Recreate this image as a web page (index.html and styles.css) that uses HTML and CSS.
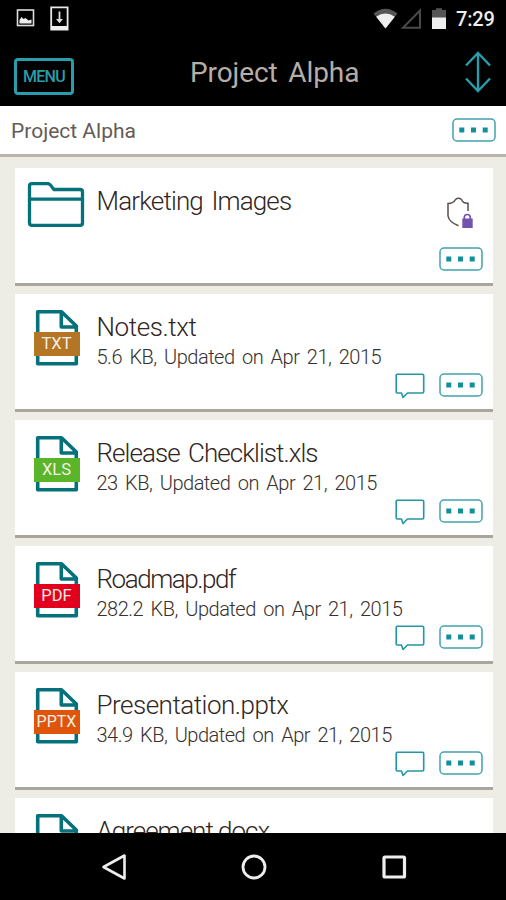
FILE: index.html
```html
<!DOCTYPE html>
<html lang="en">
<head>
<meta charset="utf-8">
<title>Project Alpha</title>
<link rel="stylesheet" href="styles.css">
</head>
<body>
<svg class="defs" aria-hidden="true">
  <symbol id="file" viewBox="0 0 46 58">
    <path d="M3.7 2.7H27.5L42.3 17V54.7H3.7Z M27.3 3V18H42" fill="none" stroke="#04717b" stroke-width="3.6" stroke-linejoin="round"/>
  </symbol>
  <symbol id="comment" viewBox="0 0 30 26">
    <path d="M2.2 1.2H27.5Q28.7 1.2 28.7 2.4V18.8Q28.7 20 27.5 20H12.5L8 24.5L6.5 20H2.2Q1.2 20 1.2 19V2.2Q1.2 1.2 2.2 1.2Z" fill="none" stroke="#2397a5" stroke-width="1.6" stroke-linejoin="round"/>
  </symbol>
  <symbol id="more" viewBox="0 0 44 24">
    <rect x="1" y="1" width="42" height="22" rx="4" fill="none" stroke="#41a3ae" stroke-width="1.5"/>
    <path d="M7.3 9.5h5v5h-5zM19 9.5h5v5h-5zM30.7 9.5h5v5h-5z" fill="#11909b"/>
  </symbol>
</svg>
<div class="screen">
  <header class="top">
    <div class="status">
      <svg class="notices" viewBox="0 0 56 26">
        <rect x="1.500" y="5" width="16" height="15.500" fill="none" stroke="#ddd" stroke-width="1.600"/>
        <path d="M3.500 18.500V15l2-3 2 2 2-1 3 2.500 3-1v4Z" fill="#eee"/>
        <path d="M35.200 2.300H51.600V24.500H35.200Z" fill="none" stroke="#e8e8e8" stroke-width="1.800"/>
        <path d="M35 21h17v3.500H35z" fill="#eee"/>
        <path d="M43.500 6.500v10" stroke="#ddd" stroke-width="1.800"/>
        <path d="M40 14h7l-3.500 4.300z" fill="#ddd"/>
      </svg>
      <div class="signals">
        <svg class="signal-icons" viewBox="0 0 74 24">
          <path d="M.5 6.500Q12.500-3 24.500 6.500L12.500 21.500Z" fill="#555"/>
          <path d="M3.200 9.700Q12.500 3.500 21.800 9.700L12.500 21.500Z" fill="#eee"/>
          <path d="M30 20.700L47 3.500V20.700Z" fill="none" stroke="#4a4a4a" stroke-width="2"/>
          <path d="M59 3h4V1.200h6V3h4v9H59z" fill="#555"/>
          <path d="M59 10.500h14V22H59z" fill="#eee"/>
        </svg>
        <span class="clock">7:29</span>
      </div>
    </div>
    <div class="bar">
      <span class="menu">MENU</span>
      <h1 class="heading">Project Alpha</h1>
      <svg class="sort" viewBox="0 0 28 42"><path d="M14 2V40M2 14.500L14 2L26 14.500M2 27.500L14 40L26 27.500" fill="none" stroke="#2a9dac" stroke-width="2.400"/></svg>
    </div>
  </header>
  <div class="crumbs"><span class="crumb">Project Alpha</span><svg class="more"><use href="#more"/></svg></div>
  <main class="list">
    <article class="card">
      <svg class="folder" viewBox="0 0 58 46"><path d="M5 1.700H21Q23 1.700 26 6.500L27 7.500H53Q55.500 7.500 55.500 10V41Q55.500 43.300 53 43.300H5Q2.500 43.300 2.500 41V4Q2.500 1.700 5 1.700ZM2.500 17.200H55.500" fill="none" stroke="#04717b" stroke-width="3.300"/></svg>
      <div class="info"><h2 class="name n1">Marketing Images</h2></div>
      <svg class="shield" viewBox="0 0 28 34">
        <path d="M23 15V7.200Q18 7.500 16.500 3.500Q13.500 1 10.500 3.500Q8.500 7.500 3 7.500V20Q4 26 13.500 29.800" fill="none" stroke="#594f4a" stroke-width="1.500"/>
        <path d="M19.300 24V21.500a3 3 0 0 1 6 0V24" fill="none" stroke="#7253ad" stroke-width="1.700"/>
        <path d="M17.300 22.500h10.400V32H17.300z" fill="#7253ad"/>
      </svg>
      <div class="actions"><svg class="more"><use href="#more"/></svg></div>
    </article>
    <article class="card">
      <div class="file"><svg class="page"><use href="#file"/></svg><span class="tag txt">TXT</span></div>
      <div class="info"><h2 class="name n2">Notes.txt</h2><p class="meta">5.6 KB, Updated on Apr 21, 2015</p></div>
      <div class="actions"><svg class="comment"><use href="#comment"/></svg><svg class="more"><use href="#more"/></svg></div>
    </article>
    <article class="card">
      <div class="file"><svg class="page"><use href="#file"/></svg><span class="tag xls">XLS</span></div>
      <div class="info"><h2 class="name n3">Release Checklist.xls</h2><p class="meta">23 KB, Updated on Apr 21, 2015</p></div>
      <div class="actions"><svg class="comment"><use href="#comment"/></svg><svg class="more"><use href="#more"/></svg></div>
    </article>
    <article class="card">
      <div class="file"><svg class="page"><use href="#file"/></svg><span class="tag pdf">PDF</span></div>
      <div class="info"><h2 class="name n4">Roadmap.pdf</h2><p class="meta">282.2 KB, Updated on Apr 21, 2015</p></div>
      <div class="actions"><svg class="comment"><use href="#comment"/></svg><svg class="more"><use href="#more"/></svg></div>
    </article>
    <article class="card">
      <div class="file"><svg class="page"><use href="#file"/></svg><span class="tag pptx">PPTX</span></div>
      <div class="info"><h2 class="name n5">Presentation.pptx</h2><p class="meta">34.9 KB, Updated on Apr 21, 2015</p></div>
      <div class="actions"><svg class="comment"><use href="#comment"/></svg><svg class="more"><use href="#more"/></svg></div>
    </article>
    <article class="card">
      <div class="file"><svg class="page"><use href="#file"/></svg></div>
      <div class="info"><h2 class="name n6">Agreement.docx</h2></div>
    </article>
  </main>
  <nav class="nav">
    <svg class="key" viewBox="0 0 28 28"><path d="M24.500 2.500V25.500L3.500 14Z" fill="none" stroke="#eee" stroke-width="2.600" stroke-linejoin="round"/></svg>
    <svg class="key" viewBox="0 0 28 28"><circle cx="14" cy="14" r="11" fill="none" stroke="#eee" stroke-width="2.800"/></svg>
    <svg class="key" viewBox="0 0 28 28"><rect x="4" y="4" width="20.500" height="20" rx="1" fill="none" stroke="#eee" stroke-width="3.200"/></svg>
  </nav>
</div>
</body>
</html>
```
FILE: styles.css
```css
* { box-sizing: border-box; }
body { margin: 0; font-family: Roboto, "Liberation Sans", sans-serif; }
h1, h2, p { margin: 0; font-weight: 300; white-space: nowrap; }
svg { display: block; flex: none; }
.defs { position: absolute; width: 0; height: 0; }
.screen { width: 506px; height: 900px; display: flex; flex-direction: column; overflow: hidden; background: #edece5; }
.top { height: 106px; flex: none; background: #000; }
.status { height: 40px; padding: 5px 11px 0 16px; display: flex; justify-content: space-between; }
.notices { width: 56px; height: 26px; }
.signals { display: flex; gap: 9px; }
.signal-icons { width: 74px; height: 24px; margin-top: 2px; }
.clock { width: 39px; font-size: 20px; line-height: 28px; font-weight: 500; color: #eee; letter-spacing: -0.2px; white-space: nowrap; }
.bar { height: 66px; padding: 11px 14px 0; display: grid; grid-template-columns: 60px 1fr 28px; align-items: start; }
.menu { height: 37px; margin-top: 7px; border: 3px solid #2a9dac; border-radius: 4px; color: #2a9dac; font-size: 16px; line-height: 32px; font-weight: 500; text-align: center; letter-spacing: -0.7px; }
.heading { padding-left: 116px; margin-top: 4px; font-size: 28px; line-height: 36px; font-weight: 400; color: #b5aea7; letter-spacing: -0.1px; word-spacing: 4px; }
.sort { width: 28px; height: 42px; }
.crumbs { height: 51px; flex: none; padding: 0 10px 0 11px; display: flex; justify-content: space-between; background: #fff; border-bottom: 3px solid #b8b4aa; }
.crumb { font-size: 21px; line-height: 50px; color: #655b55; white-space: nowrap; }
.more { width: 44px; height: 24px; }
.crumbs .more { margin-top: 12px; }
.list { flex: 1; min-height: 0; overflow: hidden; padding: 11px 13px 0 14.5px; display: flex; flex-direction: column; gap: 8px; }
.card { height: 118px; flex: none; display: grid; grid-template-columns: 68px 1fr 48px; grid-template-rows: 79px 36px; padding-left: 14px; background: #fff; border-bottom: 3px solid #aaa69b; }
.folder { width: 58px; height: 46px; margin: 14px 0 0 -2px; }
.file { width: 46px; height: 58px; margin: 15px 0 0 5px; display: grid; }
.page { width: 46px; height: 58px; grid-area: 1 / 1; }
.tag { grid-area: 1 / 1; z-index: 1; height: 24px; width: 46px; margin-top: 23px; color: #f5eee5; font-size: 16.5px; line-height: 24px; text-align: center; white-space: nowrap; }
.txt { background: #b47624; }
.xls { background: #5ab52b; }
.pdf { background: #e2001f; }
.pptx { background: #df550c; font-size: 16px; }
.info { padding-top: 17px; grid-column: 2 / 4; grid-row: 1; }
.name { font-size: 26px; line-height: 32px; color: #302522; word-spacing: 3px; }
.n1 { letter-spacing: -0.85px; }
.n2 { letter-spacing: -0.4px; }
.n3 { letter-spacing: -0.95px; }
.n4 { letter-spacing: -1.45px; }
.n5 { letter-spacing: -0.5px; }
.n6 { letter-spacing: -1px; }
.meta { font-size: 20px; line-height: 28px; color: #37302d; letter-spacing: -0.49px; word-spacing: 3px; }
.shield { grid-column: 3; grid-row: 1; width: 28px; height: 34px; margin: 28px 0 0 0; }
.actions { grid-column: 1 / -1; grid-row: 2; display: flex; justify-content: flex-end; gap: 14px; padding-right: 10.5px; }
.comment { width: 30px; height: 26px; }
.nav { height: 67px; flex: none; background: #000; display: flex; justify-content: center; align-items: center; gap: 112px; padding-left: 2px; }
.key { width: 28px; height: 28px; }
```
